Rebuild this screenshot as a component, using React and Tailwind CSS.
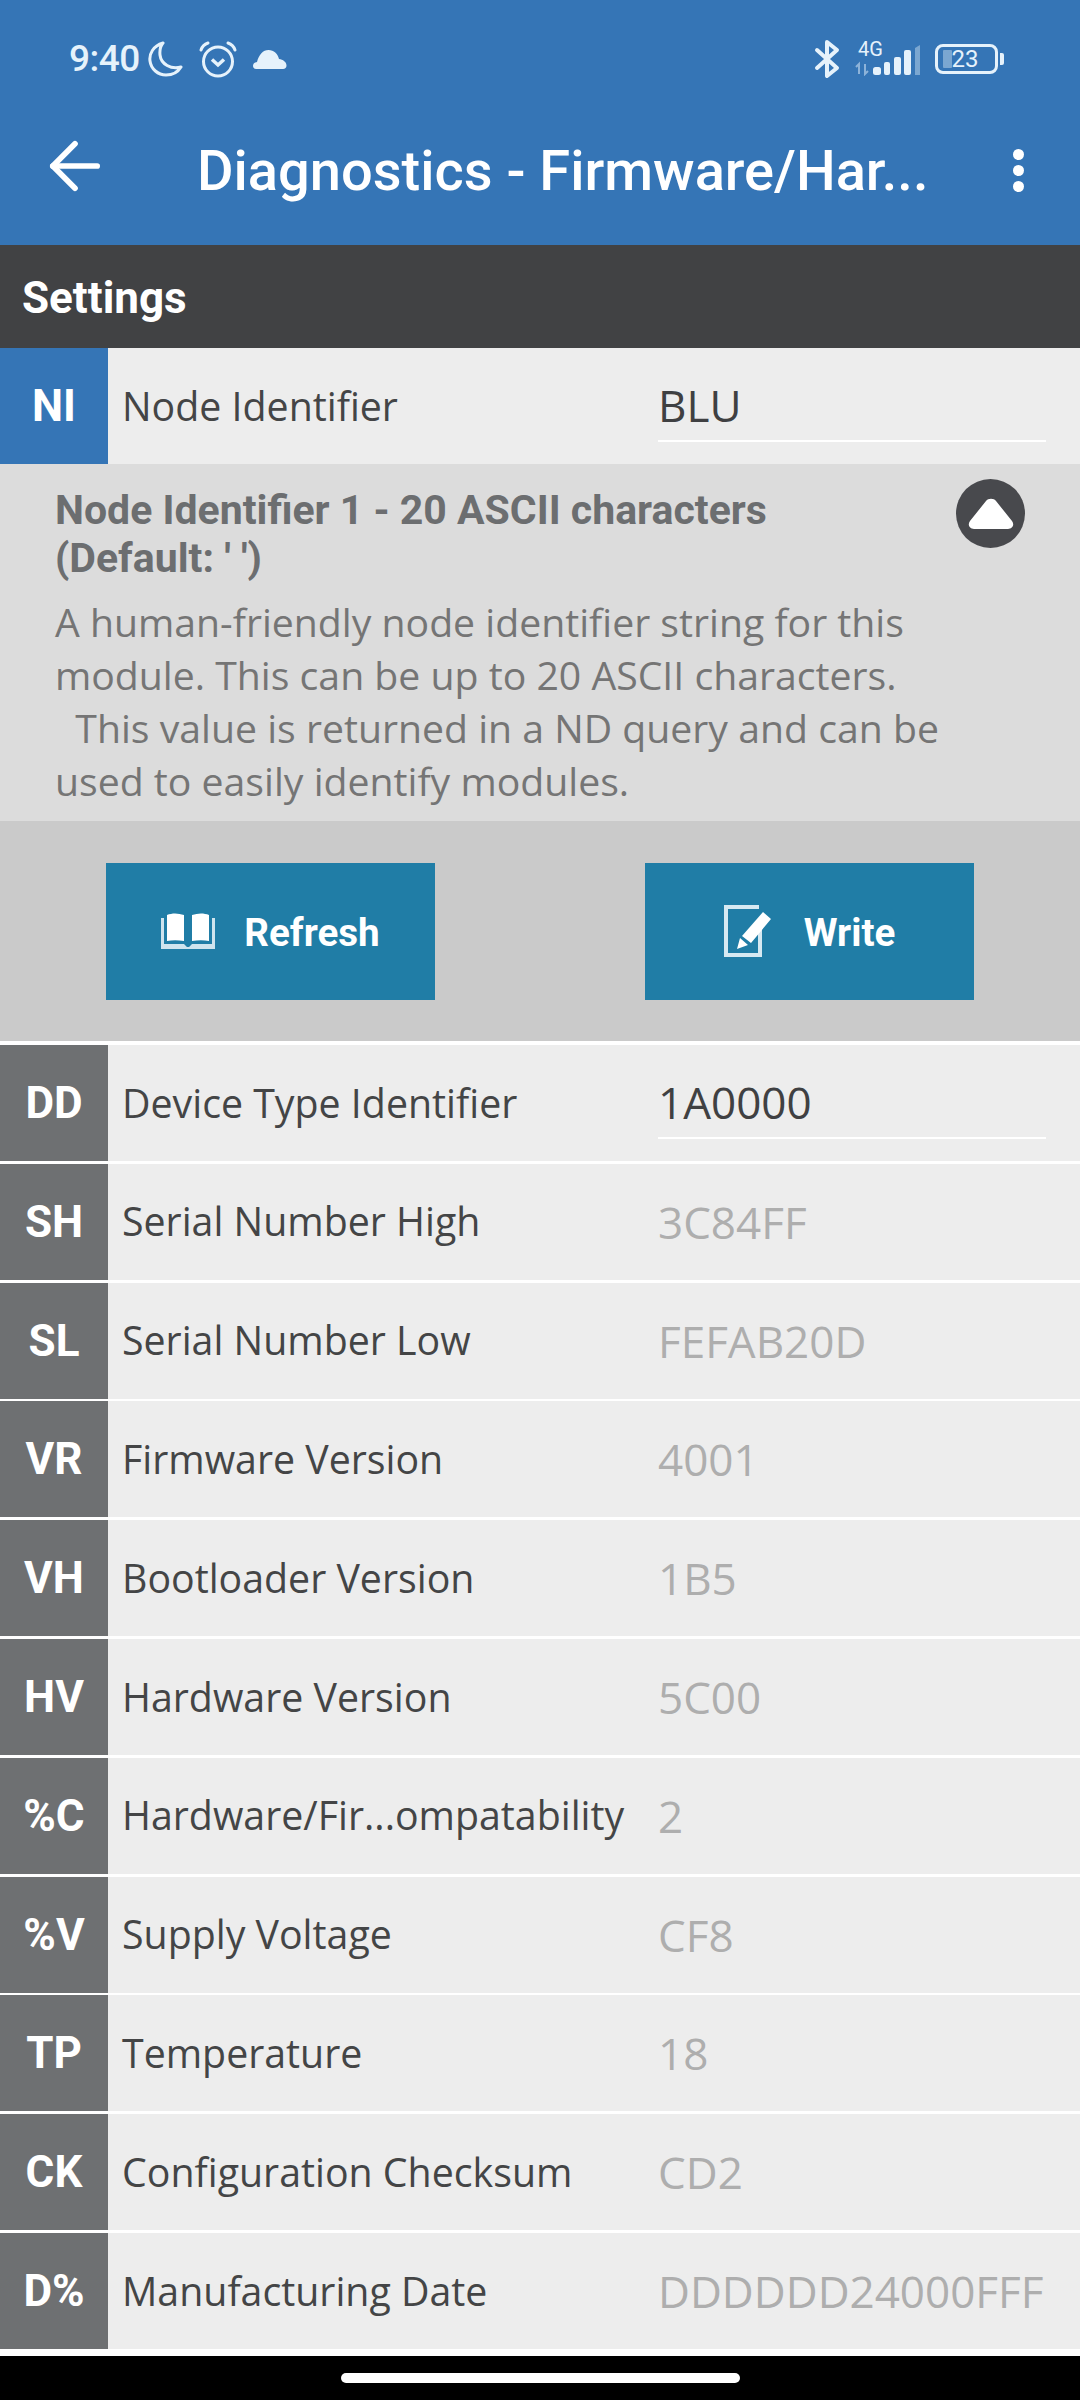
import { ArrowLeft } from "lucide-react";

const rows = [
  { tag: "DD", label: "Device Type Identifier", value: "1A0000", editable: true },
  { tag: "SH", label: "Serial Number High", value: "3C84FF" },
  { tag: "SL", label: "Serial Number Low", value: "FEFAB20D" },
  { tag: "VR", label: "Firmware Version", value: "4001" },
  { tag: "VH", label: "Bootloader Version", value: "1B5" },
  { tag: "HV", label: "Hardware Version", value: "5C00" },
  { tag: "%C", label: "Hardware/Fir...ompatability", value: "2" },
  { tag: "%V", label: "Supply Voltage", value: "CF8" },
  { tag: "TP", label: "Temperature", value: "18" },
  { tag: "CK", label: "Configuration Checksum", value: "CD2" },
  { tag: "D%", label: "Manufacturing Date", value: "DDDDDD24000FFF" },
];

const StatusBar = () => (
  <div className="flex items-center h-[117px] pl-[69px] pr-[76px] text-[#e6f2fb]">
    <span className="font-['Roboto',sans-serif] text-[37px] leading-none font-medium tracking-[-0.5px]">9:40</span>
    {/* moon */}
    <svg className="ml-[7px]" width="36" height="38" viewBox="0 0 36 38" fill="none" stroke="currentColor" strokeWidth="3">
      <path d="M16 3C6 6 2 14 3 21c1 8 8 14 16 14 7 0 12-3 15-8-10 3-20-3-21-12-.5-5 .5-9 3-12Z" strokeLinejoin="round" />
    </svg>
    {/* alarm */}
    <svg className="ml-[15px]" width="40" height="38" viewBox="0 0 40 38" fill="none" stroke="currentColor" strokeWidth="3">
      <circle cx="20" cy="21.500" r="14.500" />
      <path d="M14 19.500l6 5.500 6-5.500" strokeWidth="3.500" />
      <path d="M3 10c1-3 4-6 7-7M37 10c-1-3-4-6-7-7" strokeLinecap="round" />
    </svg>
    {/* cloud */}
    <svg className="ml-[15px]" width="34" height="20" viewBox="0 0 34 20" fill="currentColor">
      <path d="M3 20C1 20 0 18.500 0 16.800c0-2 1.500-3.500 4-3.800C6 5.500 10 1 15.500 1 21 1 24.500 4.500 26 10c4 .5 7.500 3 7.500 6.500 0 2-1.300 3.500-3.500 3.500Z" />
    </svg>

    <div className="flex items-center ml-auto">
      {/* bluetooth */}
      <svg width="26" height="40" viewBox="0 0 26 40" fill="none" stroke="currentColor" strokeWidth="4" strokeLinejoin="round" strokeLinecap="round">
        <path d="M3 11l20 18-10 8V3l10 8L3 29" />
      </svg>
      {/* 4G + signal */}
      <div className="relative ml-[15px] w-[65px] h-[34px]">
        <span className="absolute left-[3px] top-[-3px] font-['Roboto',sans-serif] text-[20px] leading-[20px]">4G</span>
        <svg className="absolute left-0 top-0" width="65" height="34" viewBox="0 0 65 34" fill="currentColor">
          <path d="M4 32v-10l-3 3M10 22v10l3-3" fill="none" stroke="currentColor" strokeWidth="2" opacity="0.5" />
          <rect x="18" y="25" width="8" height="8" rx="2.500" />
          <rect x="29" y="20" width="6" height="13" rx="2" />
          <rect x="39" y="15" width="7" height="18" rx="2" />
          <rect x="49" y="8" width="7" height="25" rx="2" />
          <path d="M60 6l5-3v30h-5Z" opacity="0.4" />
        </svg>
      </div>
      {/* battery */}
      <div className="ml-[15px] flex items-center">
        <div className="relative flex items-center justify-center w-[63px] h-[30px] border-[3px] border-[#e6f2fb] rounded-[8px] font-['Roboto',sans-serif] text-[24px] leading-none pr-[3px]">
          <div className="absolute left-[5px] top-[3px] bottom-[3px] w-[9px] bg-[#e6f2fb]/40 rounded-[1px]" />
          <span className="relative">23</span>
        </div>
        <div className="ml-[2px] w-[4px] h-[12px] bg-[#e6f2fb] rounded-r-[2px]" />
      </div>
    </div>
  </div>
);

const Row = ({ tag, label, value, editable, active }) => (
  <div className="flex h-[116px] bg-[#ededed]">
    <div
      className={`flex items-center justify-center w-[108px] shrink-0 font-['Roboto',sans-serif] font-bold text-[44px] text-white ${
        active ? "bg-[#3575b6]" : "bg-[#6e7072]"
      }`}
    >
      {tag}
    </div>
    <div className="w-[550px] pl-[14px] flex items-center font-['Open_Sans',sans-serif] text-[39.300px] text-[#444546] whitespace-nowrap">
      {label}
    </div>
    {editable ? (
      <div className="flex items-center w-[388px] h-[94px] pt-[22px] border-b-2 border-white font-['Open_Sans',sans-serif] text-[44px] text-[#3f4042]">
        {value}
      </div>
    ) : (
      <div className="flex items-center font-['Open_Sans',sans-serif] text-[44px] text-[#aeaeae]">{value}</div>
    )}
  </div>
);

const ActionButton = ({ icon, label, gap }) => (
  <button className={`flex items-center justify-center ${gap} w-[329px] h-[137px] bg-[#207da6] font-['Roboto',sans-serif] font-bold text-[38.600px] text-white`}>
    {icon}
    <span className="pt-[3px]">{label}</span>
  </button>
);

export default function App() {
  return (
    <div className="flex flex-col h-[2400px] bg-white">
      {/* Header */}
      <div className="h-[245px] shrink-0 bg-[#3575b6]">
        <StatusBar />
        <div className="flex items-center h-[106px] text-white">
          <ArrowLeft className="ml-[37px] mb-[8px] shrink-0" size={76} strokeWidth={1.800} />
          <span className="ml-[84px] pt-[2px] font-['Roboto',sans-serif] font-medium text-[56px] whitespace-nowrap">
            Diagnostics - Firmware/Har...
          </span>
          <div className="flex flex-col gap-[5px] ml-auto mr-[56px]">
            <div className="w-[11px] h-[11px] rounded-full bg-white" />
            <div className="w-[11px] h-[11px] rounded-full bg-white" />
            <div className="w-[11px] h-[11px] rounded-full bg-white" />
          </div>
        </div>
      </div>

      <div className="flex items-center h-[103px] shrink-0 pl-[22px] pt-[3px] bg-[#414244] font-['Roboto',sans-serif] font-bold text-[44px] text-white">
        Settings
      </div>

      <Row tag="NI" label="Node Identifier" value="BLU" editable active />

      {/* Description */}
      <div className="flex justify-between h-[357px] shrink-0 pl-[55px] pr-[55px] pt-[22px] bg-[#dcdcdc]">
        <div>
          <h2 className="font-['Roboto',sans-serif] font-bold text-[41px] leading-[48px] text-[#6c6e70]">
            Node Identifier 1 - 20 ASCII characters
            <br />
            (Default: ' ')
          </h2>
          <p className="mt-[13px] font-['Open_Sans',sans-serif] text-[39.200px] leading-[53px] text-[#757575] whitespace-pre">
            {"A human-friendly node identifier string for this\nmodule. This can be up to 20 ASCII characters.\n  This value is returned in a ND query and can be\nused to easily identify modules."}
          </p>
        </div>
        <button className="flex items-center justify-center w-[69px] h-[69px] mt-[-7px] rounded-full bg-[#48494d] shrink-0">
          <svg width="46" height="31" viewBox="0 0 46 31" fill="white">
            <path d="M18 3c2-3 8-3 10 0l16 20c3 4 0 8-4 8H6c-4 0-7-4-4-8Z" />
          </svg>
        </button>
      </div>

      {/* Buttons */}
      <div className="flex items-center gap-[210px] h-[220px] shrink-0 pl-[106px] bg-[#cacaca]">
        <ActionButton
          gap="gap-[29px]"
          label="Refresh"
          icon={
            <svg width="54" height="36" viewBox="0 0 54 36">
              <path d="M0 5h3v26h20l3 3h2l3-3h20V5h3v31H0Z" fill="#cfe4ee" />
              <path d="M6 2c5-2 11-2 17 0v26c-6-1-12-1-17 0ZM48 2c-5-2-11-2-17 0v26c6-1 12-1 17 0Z" fill="white" />
            </svg>
          }
        />
        <ActionButton
          gap="gap-[32px]"
          label="Write"
          icon={
            <svg width="48" height="52" viewBox="0 0 48 52" fill="none">
              <path d="M35 2H2v48h34V24" stroke="#d6e9f2" strokeWidth="4" />
              <path d="M39 7l8 7-20 24-9-7ZM16 33l8 7-11 4Z" fill="white" />
            </svg>
          }
        />
      </div>

      {/* Rows */}
      <div className="flex flex-col gap-[2.800px] mt-[4px]">
        {rows.map((row) => (
          <Row key={row.tag} {...row} />
        ))}
      </div>

      {/* Nav bar */}
      <div className="flex justify-center mt-[7px] flex-1 bg-black">
        <div className="mt-[17px] w-[399px] h-[10px] rounded-full bg-white" />
      </div>
    </div>
  );
}
